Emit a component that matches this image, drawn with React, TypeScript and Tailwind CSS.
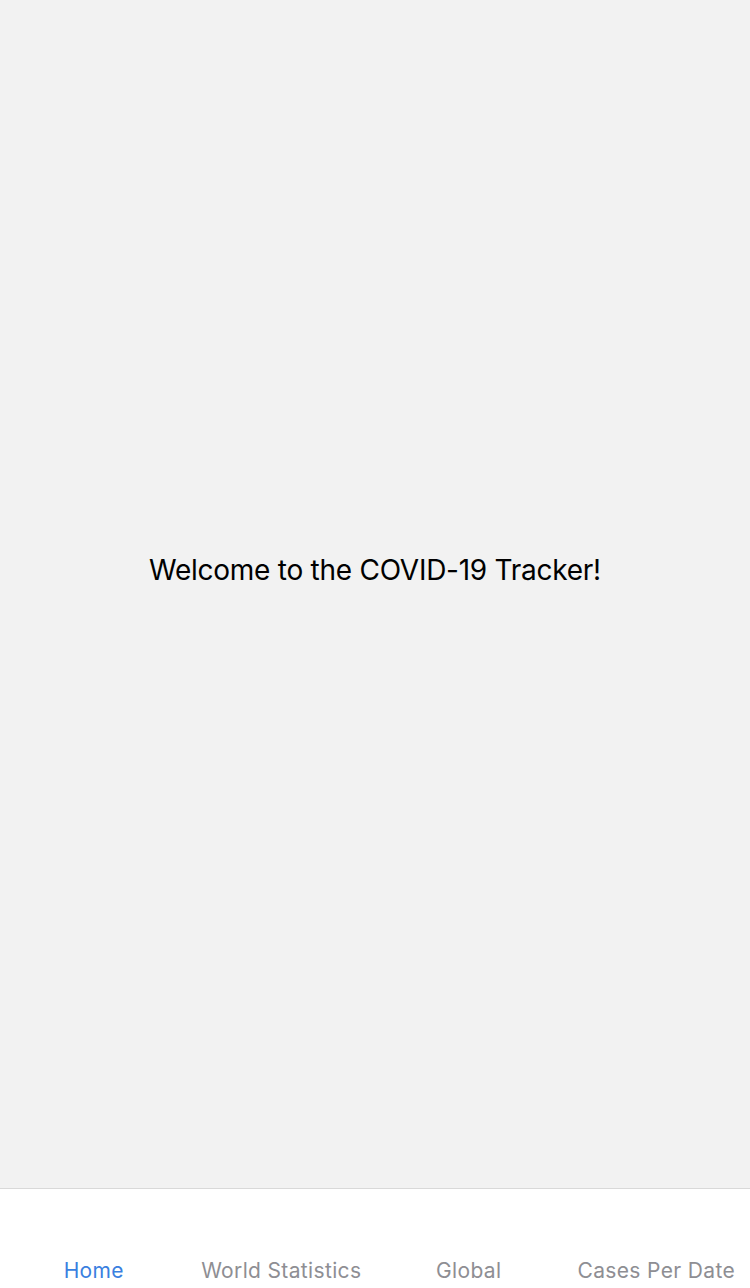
import React from 'react';

const tabs = ['Home', 'World Statistics', 'Global', 'Cases Per Date'];

export default function App() {
  const active = 0;

  return (
    <div className="flex h-[1288px] w-[750px] flex-col bg-[#f2f2f2] font-['Inter','Noto_Sans',sans-serif]">
      <main className="flex flex-1 items-center justify-center pb-[48px]">
        <p className="text-[28px] leading-none tracking-[-0.26px] text-black">Welcome to the COVID-19 Tracker!</p>
      </main>

      {/* bottom tab bar */}
      <nav className="grid h-[100px] grid-cols-4 border-t border-[#d9d9d9] bg-white">
        {tabs.map((t, i) => (
          <button
            key={t}
            className={`flex items-end justify-center pb-[7px] text-[21px] leading-none tracking-[0.35px] ${
              i === active ? 'text-[#3a7fe0]' : 'text-[#8e8e93]'
            }`}
          >
            {t}
          </button>
        ))}
      </nav>
    </div>
  );
}
